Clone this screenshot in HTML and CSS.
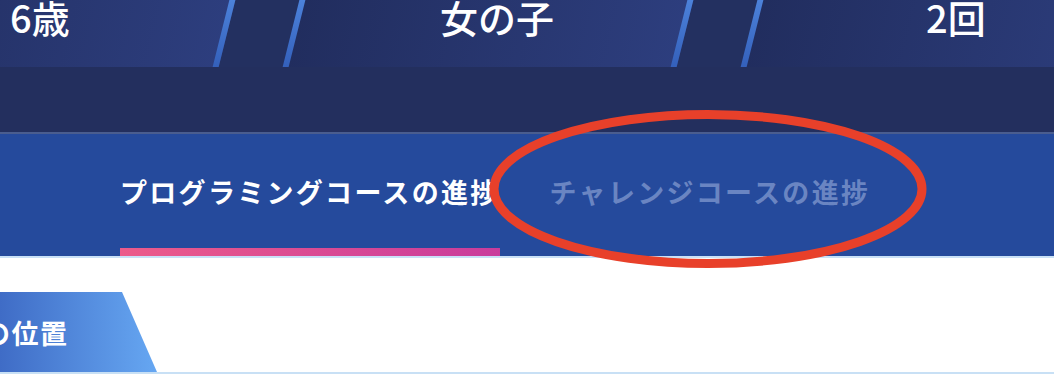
FILE: index.html
```html
<!DOCTYPE html>
<html lang="ja">
<head>
<meta charset="utf-8">
<link rel="stylesheet" href="styles.css">
</head>
<body>
<div class="page">
  <div class="stats">
    <div class="seg"><span class="seg-text">6歳</span></div>
    <div class="seg"><span class="seg-text">女の子</span></div>
    <div class="seg"><span class="seg-text">2回</span></div>
  </div>
  <div class="subband"></div>
  <nav class="tabs">
    <div class="tab active">プログラミングコースの進捗</div>
    <div class="tab">チャレンジコースの進捗</div>
  </nav>
  <section class="content">
    <div class="label"><span class="label-text">の位置</span></div>
  </section>
  <svg class="mark" width="1054" height="382" viewBox="0 0 1054 382">
    <ellipse cx="708" cy="189" rx="214" ry="74.5" fill="none" stroke="#e8402a" stroke-width="9"/>
  </svg>
</div>
</body>
</html>
```

FILE: styles.css
```css
* { box-sizing: border-box; }
html, body { margin: 0; padding: 0; }
body {
  width: 1054px;
  height: 382px;
  overflow: hidden;
  background: #ffffff;
  font-family: "Noto Sans CJK JP", "Noto Sans", sans-serif;
}
.page {
  position: relative;
  width: 1054px;
  height: 382px;
  overflow: hidden;
}
.stats {
  display: flex;
  gap: 64px;
  height: 67px;
  margin-left: -167px;
  background: #233060;
}
.seg {
  flex: 0 0 394px;
  height: 67px;
  transform: skewX(-14deg);
  background:
    linear-gradient(#4c82da, #3460bb) left top / 6px 100% no-repeat,
    linear-gradient(#4c82da, #3460bb) right top / 6px 100% no-repeat,
    linear-gradient(90deg, #212d5e 0%, #2d3e7e 100%);
  display: flex;
  justify-content: center;
  padding-left: 19px;
}
.seg-text {
  transform: skewX(14deg);
  color: #ffffff;
  font-size: 38px;
  font-weight: 500;
  line-height: 34px;
  white-space: nowrap;
}
.subband {
  height: 67px;
  background: #232f5e;
  border-bottom: 2px solid #4a5d8f;
}
.tabs {
  display: flex;
  gap: 50px;
  height: 122px;
  padding-left: 120px;
  background: #254a9c;
}
.tab {
  display: flex;
  align-items: center;
  padding-bottom: 8px;
  font-size: 27px;
  font-weight: 700;
  letter-spacing: 2.3px;
  color: #6a85c2;
  white-space: nowrap;
}
.tab.active {
  color: #ffffff;
  background: linear-gradient(90deg, #ec5b8a, #c93c9c) left bottom / 100% 8px no-repeat;
}
.content {
  border-top: 2px solid #c9e1f7;
  padding-top: 34px;
  background: #ffffff;
}
.label {
  width: 157px;
  height: 80px;
  background: linear-gradient(90deg, #3f6cc6 0%, #66a7f2 100%);
  clip-path: polygon(0 0, 122px 0, 157px 80px, 0 80px);
  display: flex;
  align-items: center;
}
.content::after {
  content: "";
  display: block;
  height: 2px;
  background: #c8e0f5;
}
.label-text {
  margin-left: -17px;
  color: #ffffff;
  font-size: 27px;
  font-weight: 700;
  letter-spacing: 1.5px;
  white-space: nowrap;
}
.mark {
  position: absolute;
  left: 0;
  top: 0;
  pointer-events: none;
}
```
